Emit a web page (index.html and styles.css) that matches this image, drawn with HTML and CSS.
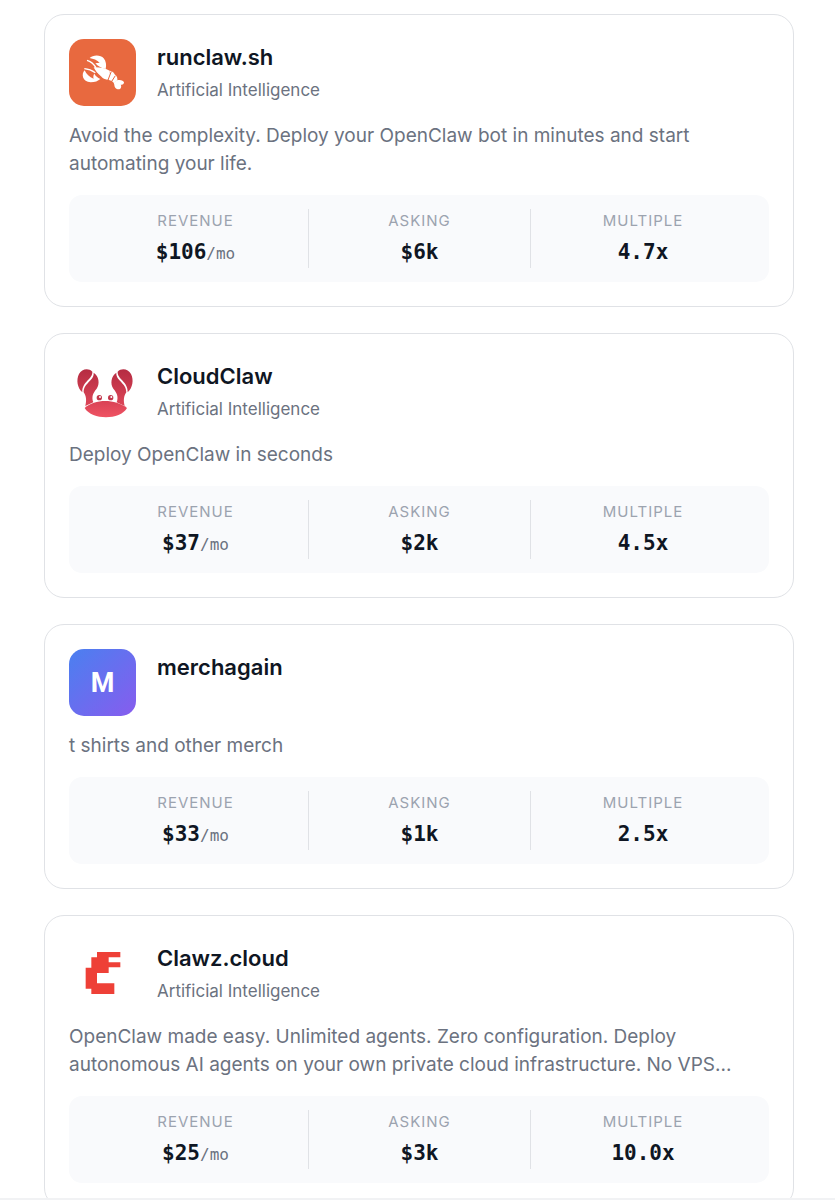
FILE: index.html
```html
<!DOCTYPE html>
<html lang="en">
<head>
    <meta charset="UTF-8">
    <meta name="viewport" content="width=device-width, initial-scale=1.0">
    <title>Startups for sale</title>
    <link rel="stylesheet" href="styles.css">
</head>
<body>

<main class="listings">

    <article class="card">
        <header class="card-header">
            <svg class="logo" viewBox="27 27 201 201" aria-hidden="true">
                <rect x="27" y="27" width="201" height="201" rx="45" fill="#e8693f"/>
                <g fill="#fff">
                    <!-- upper claw -->
                    <path d="M89 84C98 74 122 73 131 85C138 94 140 105 137 117C124 115 113 108 106 100L119 98C112 90 99 86 89 84Z"/>
                    <!-- lower claw -->
                    <path d="M74 121C63 131 67 157 92 157C105 157 114 153 121 147C113 143 107 138 103 131C100 135 99 141 101 146C88 142 79 132 74 121Z"/>
                    <!-- body -->
                    <path d="M101 112C115 111 137 114 149 122L147 148C139 151 130 147 123 139C114 132 106 122 101 112Z"/>
                    <!-- tail -->
                    <path d="M149 122C158 123 164 130 166 137L155 153L145 149Z"/>
                    <path d="M166 134C171 138 173 145 172 151L162 159L155 153Z"/>
                    <path d="M171 151C180 148 191 151 192 157C192 163 187 166 182 164C186 170 182 178 176 178C168 178 163 171 163 164L161 158Z"/>
                </g>
                <!-- antennae -->
                <path d="M81 91Q97 95 108 113M73 116Q91 117 106 128" fill="none" stroke="#fff" stroke-width="4"/>
                <path d="M154 124L144 150M166 137L154 156" fill="none" stroke="#e8693f" stroke-width="3"/>
            </svg>
            <div class="card-heading">
                <h2 class="name">runclaw.sh</h2>
                <p class="category">Artificial Intelligence</p>
            </div>
        </header>
        <p class="description">Avoid the complexity. Deploy your OpenClaw bot in minutes and start automating your life.</p>
        <dl class="stats">
            <div class="stat"><dt>Revenue</dt><dd>$106<span class="unit">/mo</span></dd></div>
            <div class="stat"><dt>Asking</dt><dd>$6k</dd></div>
            <div class="stat"><dt>Multiple</dt><dd>4.7x</dd></div>
        </dl>
    </article>

    <article class="card">
        <header class="card-header">
            <svg class="logo" viewBox="27 23 201 201" aria-hidden="true">
                <defs>
                    <linearGradient id="crab" x1="0" y1="57" x2="0" y2="165" gradientUnits="userSpaceOnUse">
                        <stop offset="0" stop-color="#b52c42"/>
                        <stop offset="1" stop-color="#dc4557"/>
                    </linearGradient>
                    <linearGradient id="shell" x1="0" y1="0" x2="0" y2="1">
                        <stop offset="0" stop-color="#d94255"/>
                        <stop offset="1" stop-color="#ef5363"/>
                    </linearGradient>
                </defs>
                <!-- left claw, then the same one mirrored -->
                <g fill="url(#crab)">
                    <path d="M67 126C52 113 48 88 57 71C65 56 85 52 97 64C99 86 65 94 67 126Z"/>
                    <path d="M101 67C117 78 120 100 110 115C99 128 94 139 100 156L76 167C80 150 79 138 71 126C70 98 103 91 101 67Z"/>
                </g>
                <g fill="url(#crab)" transform="matrix(-1 0 0 1 270 0)">
                    <path d="M67 126C52 113 48 88 57 71C65 56 85 52 97 64C99 86 65 94 67 126Z"/>
                    <path d="M101 67C117 78 120 100 110 115C99 128 94 139 100 156L76 167C80 150 79 138 71 126C70 98 103 91 101 67Z"/>
                </g>
                <path d="M74 173C105 145 165 145 201 173C180 210 96 210 74 173Z" fill="url(#shell)"/>
                <circle cx="118" cy="142" r="8" fill="#c2374c"/>
                <circle cx="152" cy="142" r="8" fill="#c2374c"/>
                <circle cx="120" cy="140" r="3" fill="#fff"/>
                <circle cx="154" cy="140" r="3" fill="#fff"/>
            </svg>
            <div class="card-heading">
                <h2 class="name">CloudClaw</h2>
                <p class="category">Artificial Intelligence</p>
            </div>
        </header>
        <p class="description">Deploy OpenClaw in seconds</p>
        <dl class="stats">
            <div class="stat"><dt>Revenue</dt><dd>$37<span class="unit">/mo</span></dd></div>
            <div class="stat"><dt>Asking</dt><dd>$2k</dd></div>
            <div class="stat"><dt>Multiple</dt><dd>4.5x</dd></div>
        </dl>
    </article>

    <article class="card">
        <header class="card-header">
            <div class="logo logo-letter">M</div>
            <div class="card-heading">
                <h2 class="name">merchagain</h2>
            </div>
        </header>
        <p class="description">t shirts and other merch</p>
        <dl class="stats">
            <div class="stat"><dt>Revenue</dt><dd>$33<span class="unit">/mo</span></dd></div>
            <div class="stat"><dt>Asking</dt><dd>$1k</dd></div>
            <div class="stat"><dt>Multiple</dt><dd>2.5x</dd></div>
        </dl>
    </article>

    <article class="card">
        <header class="card-header">
            <svg class="logo" viewBox="27 24 201 201" aria-hidden="true">
                <path d="M111 60H181V76H146V91H181V106H146V123H111V154H163V186H94V170H77V107H94V76H111Z" fill="#ee4037"/>
            </svg>
            <div class="card-heading">
                <h2 class="name">Clawz.cloud</h2>
                <p class="category">Artificial Intelligence</p>
            </div>
        </header>
        <p class="description">OpenClaw made easy. Unlimited agents. Zero configuration. Deploy autonomous AI agents on your own private cloud infrastructure. No VPS...</p>
        <dl class="stats">
            <div class="stat"><dt>Revenue</dt><dd>$25<span class="unit">/mo</span></dd></div>
            <div class="stat"><dt>Asking</dt><dd>$3k</dd></div>
            <div class="stat"><dt>Multiple</dt><dd>10.0x</dd></div>
        </dl>
    </article>

</main>

<div class="bottom-bar"></div>

</body>
</html>
```

FILE: styles.css
```css
* {
    margin: 0;
    padding: 0;
    box-sizing: border-box;
}
body {
    font-family: Inter, "Liberation Sans", sans-serif;
    background-color: #fff;
    color: #0f1623;
}
.listings {
    display: flex;
    flex-direction: column;
    gap: 26px;
    padding: 14px 41px 24px 44px;
}
.card {
    border: 1px solid #e0e2e6;
    border-radius: 20px;
    padding: 24px;
}
.card-header {
    display: flex;
    gap: 21px;
}
.logo {
    width: 67px;
    height: 67px;
    flex-shrink: 0;
}
.logo-letter {
    display: flex;
    align-items: center;
    justify-content: center;
    border-radius: 15px;
    background: linear-gradient(135deg, #4a80f0, #875cee);
    color: #fff;
    font-family: Roboto, sans-serif;
    font-size: 27px;
    font-weight: 700;
}
.name {
    font-size: 22px;
    font-weight: 600;
    line-height: 36px;
}
.category {
    margin-top: 4px;
    font-size: 17px;
    line-height: 22px;
    color: #6b7280;
}
.description {
    margin: 16px 0 17px;
    font-size: 19px;
    line-height: 28px;
    color: #6b7280;
}
.stats {
    display: grid;
    grid-template-columns: 224fr 221fr 224fr;
    padding: 14px;
    border-radius: 13px;
    background-color: #f9fafc;
    text-align: center;
}
.stat + .stat {
    border-left: 1px solid #e0e2e6;
}
dt {
    font-size: 15px;
    line-height: 24px;
    letter-spacing: 1px;
    text-transform: uppercase;
    color: #9ca3af;
}
dd {
    margin-top: 3px;
    font-family: "DejaVu Sans Mono", monospace;
    font-size: 21px;
    font-weight: 700;
    line-height: 32px;
}
.unit {
    font-size: 16px;
    font-weight: 400;
    line-height: 1;
    color: #6b7280;
}
.bottom-bar {
    position: fixed;
    left: 0;
    right: 0;
    bottom: 0;
    height: 2px;
    background-color: #f1f2f4;
}
```
